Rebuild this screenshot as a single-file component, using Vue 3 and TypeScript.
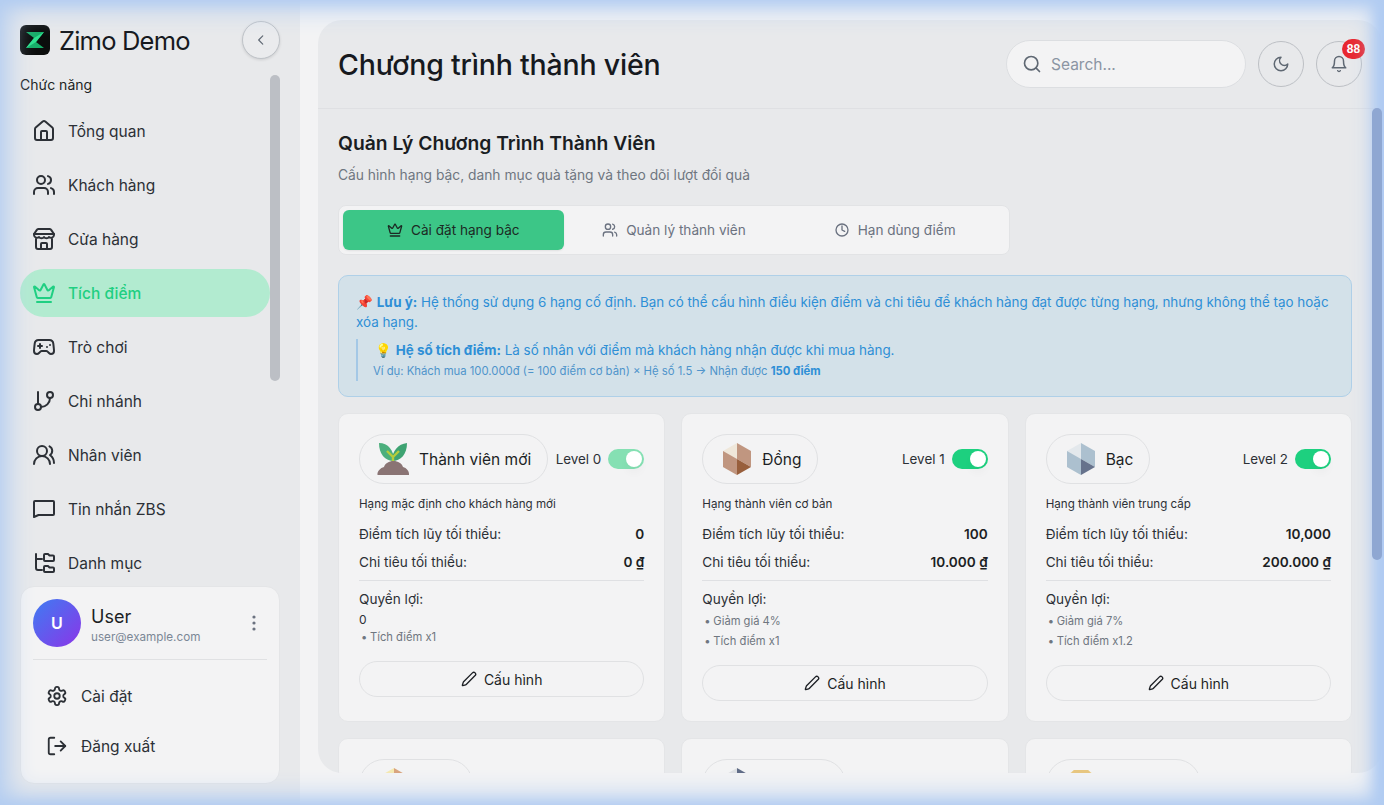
<template>
  <div class="shell">
    <aside class="sidebar">
      <div class="brand">
        <svg class="logo" width="30" height="30" viewBox="0 0 30 30">
          <rect width="30" height="30" rx="6" fill="#0b0d0c" />
          <path d="M6 7h18l-8 10 8 6H6l8-10z" fill="#17ad68" />
          <path d="M24 7l-8 10-10 6 8-10z" fill="#2ee08e" />
        </svg>
        <span class="brand-name">Zimo Demo</span>
        <button type="button" class="collapse-btn">
          <svg width="14" height="14" viewBox="0 0 24 24" fill="none" stroke="#5f6873" stroke-width="2" stroke-linecap="round" stroke-linejoin="round"><path d="m15 5-7 7 7 7" /></svg>
        </button>
      </div>
      <div class="nav-area">
        <div class="nav-scroll">
          <div class="nav-label">Chức năng</div>
          <nav class="nav">
            <a v-for="item in navItems" :key="item.label" class="nav-item" :class="{ active: item.active }">
              <svg width="24" height="24" viewBox="0 0 24 24" fill="none" stroke="currentColor" stroke-width="2" stroke-linecap="round" stroke-linejoin="round">
                <path v-for="d in item.paths" :key="d" :d="d" />
              </svg>
              <span>{{ item.label }}</span>
            </a>
          </nav>
        </div>
        <div class="nav-thumb"></div>
      </div>
      <div class="user-card">
        <div class="user-row">
          <div class="avatar">U</div>
          <div class="user-info">
            <div class="user-name">User</div>
            <div class="user-email">user@example.com</div>
          </div>
          <svg class="kebab" width="4" height="16" viewBox="0 0 4 16" fill="#6b7280"><circle cx="2" cy="2" r="1.6" /><circle cx="2" cy="8" r="1.6" /><circle cx="2" cy="14" r="1.6" /></svg>
        </div>
        <div class="user-actions">
          <a class="user-action">
            <svg width="22" height="22" viewBox="0 0 24 24" fill="none" stroke="currentColor" stroke-width="2" stroke-linecap="round" stroke-linejoin="round">
              <path d="M12.22 2h-.44a2 2 0 0 0-2 2v.18a2 2 0 0 1-1 1.73l-.43.25a2 2 0 0 1-2 0l-.15-.08a2 2 0 0 0-2.73.73l-.22.38a2 2 0 0 0 .73 2.73l.15.1a2 2 0 0 1 1 1.72v.51a2 2 0 0 1-1 1.74l-.15.09a2 2 0 0 0-.73 2.73l.22.38a2 2 0 0 0 2.73.73l.15-.08a2 2 0 0 1 2 0l.43.25a2 2 0 0 1 1 1.73V20a2 2 0 0 0 2 2h.44a2 2 0 0 0 2-2v-.18a2 2 0 0 1 1-1.73l.43-.25a2 2 0 0 1 2 0l.15.08a2 2 0 0 0 2.73-.73l.22-.39a2 2 0 0 0-.73-2.73l-.15-.08a2 2 0 0 1-1-1.74v-.5a2 2 0 0 1 1-1.74l.15-.09a2 2 0 0 0 .73-2.73l-.22-.38a2 2 0 0 0-2.73-.73l-.15.08a2 2 0 0 1-2 0l-.43-.25a2 2 0 0 1-1-1.73V4a2 2 0 0 0-2-2z" />
              <circle cx="12" cy="12" r="3" />
            </svg>
            <span>Cài đặt</span>
          </a>
          <a class="user-action">
            <svg width="22" height="22" viewBox="0 0 24 24" fill="none" stroke="currentColor" stroke-width="2" stroke-linecap="round" stroke-linejoin="round">
              <path d="M9 21H5a2 2 0 0 1-2-2V5a2 2 0 0 1 2-2h4" /><path d="M10 12h11" /><path d="m16 7 5 5-5 5" />
            </svg>
            <span>Đăng xuất</span>
          </a>
        </div>
      </div>
    </aside>

    <main class="panel">
      <header class="topbar">
        <h1 class="page-title">Chương trình thành viên</h1>
        <div class="top-actions">
          <div class="search">
            <svg width="20" height="20" viewBox="0 0 24 24" fill="none" stroke="#5f6873" stroke-width="2" stroke-linecap="round"><circle cx="11" cy="11" r="8" /><path d="m21 21-4-4" /></svg>
            <span class="search-text">Search...</span>
          </div>
          <button type="button" class="round-btn">
            <svg width="18" height="18" viewBox="0 0 24 24" fill="none" stroke="#5f6873" stroke-width="2" stroke-linecap="round" stroke-linejoin="round"><path d="M12 3a6 6 0 0 0 9 9 9 9 0 1 1-9-9Z" /></svg>
          </button>
          <button type="button" class="round-btn">
            <svg width="18" height="18" viewBox="0 0 24 24" fill="none" stroke="#5f6873" stroke-width="2" stroke-linecap="round" stroke-linejoin="round"><path d="M6 8a6 6 0 0 1 12 0c0 7 3 9 3 9H3s3-2 3-9" /><path d="M10.3 21a1.94 1.94 0 0 0 3.4 0" /></svg>
            <span class="badge">88</span>
          </button>
        </div>
      </header>

      <div class="content">
        <h2 class="section-title">Quản Lý Chương Trình Thành Viên</h2>
        <p class="section-sub">Cấu hình hạng bậc, danh mục quà tặng và theo dõi lượt đổi quà</p>

        <div class="tabs">
          <button v-for="tab in tabs" :key="tab.label" type="button" class="tab" :class="{ active: tab.active }">
            <svg width="16" height="16" viewBox="0 0 24 24" fill="none" stroke="currentColor" stroke-width="2" stroke-linecap="round" stroke-linejoin="round">
              <path v-for="d in tab.paths" :key="d" :d="d" />
            </svg>
            {{ tab.label }}
          </button>
        </div>

        <div class="notice">
          <p class="notice-main">📌 <b>Lưu ý:</b> Hệ thống sử dụng 6 hạng cố định. Bạn có thể cấu hình điều kiện điểm và chi tiêu để khách hàng đạt được từng hạng, nhưng không thể tạo hoặc xóa hạng.</p>
          <div class="notice-sub">
            <p class="notice-factor">💡 <b>Hệ số tích điểm:</b> Là số nhân với điểm mà khách hàng nhận được khi mua hàng.</p>
            <p class="notice-example">Ví dụ: Khách mua 100.000đ (= 100 điểm cơ bản) × Hệ số 1.5 → Nhận được <b>150 điểm</b></p>
          </div>
        </div>

        <div class="tier-grid">
          <section v-for="tier in tiers" :key="tier.level" class="tier-card">
            <div class="tier-head">
              <div class="tier-chip">
                <svg v-if="tier.icon === 'sprout'" width="36" height="36" viewBox="0 0 36 36">
                  <path d="M18 20C9 20 3 13 3 2c9 0 15 7 15 18z" fill="#4caf7d" />
                  <path d="M16 20C16 10 22 3 31 2c0 11-6 18-15 18z" fill="#3ea372" />
                  <path d="M17 22v-7M17 16l-6-6M17 16l6-6" stroke="#b5cc3c" stroke-width="2.400" fill="none" />
                  <path d="M1.500 34c-.5-4 3-7 6.500-8 1-3.500 5-6 9.500-6s8.500 2.500 9.500 6c3.500 1 6.500 4 6 8z" fill="#8a7474" />
                </svg>
                <svg v-else-if="tier.icon === 'gem'" width="36" height="36" viewBox="0 0 36 36">
                  <path d="M11 4h14l5 4v6L18 33 6 14V8z" :fill="tier.colors[1]" />
                  <path d="M11 4h14l3 3H8z" :fill="tier.colors[0]" />
                </svg>
                <svg v-else width="36" height="36" viewBox="0 0 36 36">
                  <path d="M18 2 4 10v16l14 8z" :fill="tier.colors[0]" />
                  <path d="M18 2l14 8v16l-14-8z" :fill="tier.colors[1]" />
                  <path d="M4 10l14 8v16L4 26z" :fill="tier.colors[3] || tier.colors[1]" />
                  <path d="M18 18l14 8-14 8z" :fill="tier.colors[2]" />
                </svg>
                <span class="tier-name">{{ tier.name }}</span>
              </div>
              <div class="tier-level">
                <span>Level {{ tier.level }}</span>
                <span class="switch" :class="{ dim: tier.level === 0 }"><span class="knob"></span></span>
              </div>
            </div>
            <p class="tier-desc">{{ tier.desc }}</p>
            <div class="tier-row"><span>Điểm tích lũy tối thiểu:</span><b>{{ tier.points }}</b></div>
            <div class="tier-row"><span>Chi tiêu tối thiểu:</span><b>{{ tier.spend }} ₫</b></div>
            <div class="tier-benefits">
              <div class="benefit-title">Quyền lợi:</div>
              <div v-if="tier.rawZero" class="benefit-zero">0</div>
              <ul class="benefit-list" :class="{ tight: tier.rawZero }">
                <li v-for="b in tier.benefits" :key="b">{{ b }}</li>
              </ul>
            </div>
            <button type="button" class="config-btn">
              <svg width="16" height="16" viewBox="0 0 24 24" fill="none" stroke="currentColor" stroke-width="2" stroke-linecap="round" stroke-linejoin="round"><path d="M21.170 6.810a2.820 2.820 0 0 0-3.990-3.990L3.840 16.170a2 2 0 0 0-.5.830l-1.320 4.350a.5.5 0 0 0 .62.620l4.350-1.320a2 2 0 0 0 .83-.5z" /></svg>
              Cấu hình
            </button>
          </section>
        </div>
      </div>
    </main>
    <div class="edge-glow"></div>
    <div class="content-thumb"></div>
  </div>
</template>

<script setup lang="ts">
interface NavItem {
  label: string
  paths: string[]
  active?: boolean
}

interface Tier {
  level: number
  name: string
  icon: 'sprout' | 'hex' | 'gem'
  colors: string[]
  desc: string
  points: string
  spend: string
  rawZero?: boolean
  benefits: string[]
}

const crownPaths = [
  'M11.6 3.3a.5.5 0 0 1 .8 0l3 5.7a1 1 0 0 0 1.5.3l4.3-3.7a.5.5 0 0 1 .8.5l-2.8 10.2a1 1 0 0 1-1 .7H5.8a1 1 0 0 1-1-.7L2 6.1a.5.5 0 0 1 .8-.5l4.3 3.7a1 1 0 0 0 1.500-.3z',
  'M5 21h14'
]
const usersPaths = [
  'M16 21v-2a4 4 0 0 0-4-4H6a4 4 0 0 0-4 4v2',
  'M13 7a4 4 0 1 1-8 0 4 4 0 0 1 8 0',
  'M22 21v-2a4 4 0 0 0-3-3.87',
  'M16 3.13a4 4 0 0 1 0 7.75'
]

const navItems: NavItem[] = [
  { label: 'Tổng quan', paths: ['M15 21v-8a1 1 0 0 0-1-1h-4a1 1 0 0 0-1 1v8', 'M3 10a2 2 0 0 1 .7-1.5l7-6a2 2 0 0 1 2.6 0l7 6a2 2 0 0 1 .7 1.5v9a2 2 0 0 1-2 2H5a2 2 0 0 1-2-2z'] },
  { label: 'Khách hàng', paths: usersPaths },
  { label: 'Cửa hàng', paths: ['m2 7 2.7-3.9A2 2 0 0 1 6.3 2h11.4a2 2 0 0 1 1.6 1.1L22 7', 'M2 7h20v1a3 3 0 0 1-5 2 3 3 0 0 1-5 0 3 3 0 0 1-5 0 3 3 0 0 1-5-2z', 'M4 12v8a2 2 0 0 0 2 2h12a2 2 0 0 0 2-2v-8', 'M15 22v-5a1 1 0 0 0-1-1h-4a1 1 0 0 0-1 1v5'] },
  { label: 'Tích điểm', active: true, paths: crownPaths },
  { label: 'Trò chơi', paths: ['M6 11h4', 'M8 9v4', 'M15 12h.01', 'M18 10h.01', 'M17.3 5H6.7a4 4 0 0 0-4 3.6C2.6 9.6 2 14.5 2 16a3 3 0 0 0 3 3c1 0 1.5-.5 2-1l1.4-1.4A2 2 0 0 1 9.8 16h4.4a2 2 0 0 1 1.4.6L17 18c.5.5 1 1 2 1a3 3 0 0 0 3-3c0-1.5-.6-6.4-.7-7.4A4 4 0 0 0 17.3 5'] },
  { label: 'Chi nhánh', paths: ['M6 3v12', 'M21 6a3 3 0 1 1-6 0 3 3 0 0 1 6 0', 'M9 18a3 3 0 1 1-6 0 3 3 0 0 1 6 0', 'M18 9a9 9 0 0 1-9 9'] },
  { label: 'Nhân viên', paths: ['M18 21a8 8 0 0 0-16 0', 'M15 8a5 5 0 1 1-10 0 5 5 0 0 1 10 0', 'M22 20c0-3.4-2-6.5-4-8a5 5 0 0 0-.5-8.6'] },
  { label: 'Tin nhắn ZBS', paths: ['M2 20V5a1 1 0 0 1 1-1h18a1 1 0 0 1 1 1v12a1 1 0 0 1-1 1H6.5z'] },
  { label: 'Danh mục', paths: ['M4 3v14a2 2 0 0 0 2 2h4', 'M4 8h6', 'M13 10a1 1 0 0 1-1-1V4a1 1 0 0 1 1-1h3l1.5 1.5H21a1 1 0 0 1 1 1V9a1 1 0 0 1-1 1z', 'M13 21a1 1 0 0 1-1-1v-4a1 1 0 0 1 1-1h3l1.5 1.5H21a1 1 0 0 1 1 1V20a1 1 0 0 1-1 1z'] }
]

const tabs = [
  { label: 'Cài đặt hạng bậc', active: true, paths: crownPaths },
  { label: 'Quản lý thành viên', active: false, paths: usersPaths },
  { label: 'Hạn dùng điểm', active: false, paths: ['M21 12a9 9 0 1 1-18 0 9 9 0 0 1 18 0', 'M12 6v6l4 2'] }
]

const tiers: Tier[] = [
  { level: 0, name: 'Thành viên mới', icon: 'sprout', colors: [], desc: 'Hạng mặc định cho khách hàng mới', points: '0', spend: '0', rawZero: true, benefits: ['Tích điểm x1'] },
  { level: 1, name: 'Đồng', icon: 'hex', colors: ['#efe7da', '#c09680', '#985f3c'], desc: 'Hạng thành viên cơ bản', points: '100', spend: '10.000', benefits: ['Giảm giá 4%', 'Tích điểm x1'] },
  { level: 2, name: 'Bạc', icon: 'hex', colors: ['#e3e8ec', '#acc0cf', '#66728c'], desc: 'Hạng thành viên trung cấp', points: '10,000', spend: '200.000', benefits: ['Giảm giá 7%', 'Tích điểm x1.2'] },
  { level: 3, name: 'Vàng', icon: 'hex', colors: ['#f5e9b0', '#d9a37c', '#a8763c'], desc: 'Hạng thành viên cao cấp', points: '50,000', spend: '1.000.000', benefits: ['Giảm giá 10%', 'Tích điểm x1.5'] },
  { level: 4, name: 'Bạch kim', icon: 'hex', colors: ['#dfe1e4', '#5e6a85', '#454f66', '#8b95a8'], desc: 'Hạng thành viên thân thiết', points: '100,000', spend: '5.000.000', benefits: ['Giảm giá 12%', 'Tích điểm x2'] },
  { level: 5, name: 'Kim cương', icon: 'gem', colors: ['#e8c67e', '#f2e0ad'], desc: 'Hạng thành viên cao nhất', points: '500,000', spend: '10.000.000', benefits: ['Giảm giá 15%', 'Tích điểm x3'] }
]
</script>

<style scoped>
.shell {
  position: relative;
  display: flex;
  width: 1384px;
  height: 805px;
  overflow: hidden;
  background: #f3f3f4;
  font-family: Inter, "Noto Sans", sans-serif;
  color: #1f2329;
}

.edge-glow {
  position: absolute;
  inset: 0;
  pointer-events: none;
  box-shadow: inset 0 0 26px 8px #b3cdf1, inset -8px 0 14px 0 #9fc2f6;
}

.sidebar {
  flex: 0 0 300px;
  display: flex;
  flex-direction: column;
  padding: 25px 20px 21px;
  box-sizing: border-box;
  height: 805px;
  background: #e8e9eb;
}

.brand {
  display: flex;
  align-items: center;
  height: 30px;
  flex: none;
}

.logo {
  flex: none;
}

.brand-name {
  margin-left: 9px;
  font-size: 25.500px;
  letter-spacing: -0.8px;
  color: #16191e;
}

.collapse-btn {
  display: grid;
  place-items: center;
  width: 38px;
  height: 38px;
  margin-left: auto;
  background: #eaebed;
  border: 1px solid #bfc3c8;
  border-radius: 50%;
  box-shadow: 0 1px 3px rgba(0, 0, 0, 0.12);
}

.nav-area {
  position: relative;
  flex: 1;
  min-height: 0;
  margin-top: 20px;
  overflow: hidden;
}

.nav-thumb {
  position: absolute;
  top: 0;
  right: 0;
  width: 10px;
  height: 306px;
  background: #bcbfc5;
  border-radius: 5px;
}

.nav-label {
  font-size: 14px;
  line-height: 20px;
  color: #1c1f24;
}

.nav-scroll {
  width: 250px;
}

.nav {
  display: flex;
  flex-direction: column;
  gap: 6px;
  margin-top: 12px;
}

.nav-item {
  display: flex;
  align-items: center;
  gap: 12px;
  flex: none;
  height: 48px;
  padding-left: 12px;
  border-radius: 24px;
  font-size: 15.500px;
  color: #2c3036;
}

.nav-item svg {
  flex: none;
}

.nav-item.active {
  background: #b2ebd0;
  color: #1fcf82;
  font-weight: 500;
}

.user-card {
  flex: none;
  height: 198px;
  box-sizing: border-box;
  padding: 12px 12px 0;
  background: #f3f3f4;
  border: 1px solid #e4e5e7;
  border-radius: 14px;
}

.user-row {
  display: flex;
  align-items: center;
  gap: 10px;
  height: 48px;
  padding-bottom: 12px;
  border-bottom: 1px solid #e0e1e3;
  box-sizing: content-box;
}

.avatar {
  display: grid;
  place-items: center;
  flex: none;
  width: 48px;
  height: 48px;
  border-radius: 50%;
  background: linear-gradient(135deg, #3e7cf2, #8b35e8);
  color: #fff;
  font-size: 16px;
  font-weight: 600;
}

.user-info {
  flex: 1;
  padding-top: 4px;
}

.user-name {
  font-size: 18px;
  line-height: 24px;
  color: #1c1f24;
}

.user-email {
  font-size: 11.700px;
  line-height: 16px;
  color: #7b8796;
}

.kebab {
  margin-right: 11px;
}

.user-actions {
  display: flex;
  flex-direction: column;
  gap: 6px;
  margin-top: 14px;
}

.user-action {
  display: flex;
  align-items: center;
  gap: 13px;
  height: 44px;
  padding-left: 13px;
  font-size: 15.500px;
  color: #2c3036;
}

.panel {
  position: relative;
  flex: none;
  width: 1064px;
  height: 753px;
  margin: 20px 0 0 18px;
  background: #e8e9eb;
  border-radius: 24px;
  overflow: hidden;
}

.content-thumb {
  position: absolute;
  top: 108px;
  right: 2px;
  width: 10px;
  height: 452px;
  background: #8fa7d2;
  border-radius: 5px;
}

.topbar {
  display: flex;
  align-items: center;
  justify-content: space-between;
  box-sizing: border-box;
  height: 89px;
  padding: 0 20px;
  border-bottom: 1px solid #dfe0e3;
}

.page-title {
  margin: 0;
  font-size: 28.500px;
  font-weight: 500;
  letter-spacing: -0.2px;
  color: #16191e;
}

.top-actions {
  display: flex;
  align-items: center;
  gap: 12px;
}

.search {
  display: flex;
  align-items: center;
  gap: 9px;
  box-sizing: border-box;
  width: 240px;
  height: 48px;
  padding-left: 15px;
  background: #f3f3f4;
  border: 1px solid #dcdee1;
  border-radius: 24px;
}

.search-text {
  font-size: 15.500px;
  color: #8b95a3;
}

.round-btn {
  position: relative;
  display: grid;
  place-items: center;
  width: 46px;
  height: 46px;
  background: transparent;
  border: 1px solid #bcbfc4;
  border-radius: 50%;
}

.badge {
  position: absolute;
  top: -3px;
  right: -4px;
  min-width: 23px;
  height: 20px;
  line-height: 20px;
  background: #e8262f;
  border-radius: 10px;
  color: #fff;
  font-size: 12px;
  font-weight: 700;
  text-align: center;
}

.content {
  box-sizing: border-box;
  width: 1054px;
  padding: 20px 20px 0;
}

.section-title {
  margin: 0;
  font-size: 19.300px;
  line-height: 28px;
  font-weight: 600;
  color: #1a1d22;
}

.section-sub {
  margin: 8px 0 0;
  font-size: 13.800px;
  line-height: 20px;
  color: #6f7680;
}

.tabs {
  display: flex;
  box-sizing: border-box;
  width: 672px;
  height: 50px;
  margin-top: 20px;
  padding: 4px;
  background: #f3f3f4;
  border: 1px solid #e2e3e5;
  border-radius: 8px;
}

.tab {
  flex: 1;
  display: flex;
  align-items: center;
  justify-content: center;
  gap: 8px;
  padding: 0;
  background: transparent;
  border: 0;
  border-radius: 6px;
  font: inherit;
  font-size: 13.600px;
  color: #6b7280;
}

.tab.active {
  background: #3cc687;
  color: #1c2a24;
  box-shadow: 0 1px 2px rgba(0, 0, 0, 0.08);
}

.notice {
  box-sizing: border-box;
  height: 122px;
  margin-top: 20px;
  padding: 16px 17px;
  background: #d3e1e9;
  border: 1px solid #afd0e8;
  border-radius: 10px;
  color: #2e8fd6;
  font-size: 13.400px;
}

.notice p {
  margin: 0;
}

.notice-main {
  line-height: 20px;
}

.notice-sub {
  margin-top: 7px;
  padding-left: 15px;
  border-left: 2px solid #a4c8e6;
}

.notice-factor {
  padding-left: 2px;
  line-height: 22px;
}

.notice-example {
  font-size: 11.300px;
  line-height: 20px;
  color: #4f94cb;
}

.notice-example b {
  color: #2e8fd6;
}

.tier-grid {
  display: grid;
  grid-template-columns: repeat(3, minmax(0, 1fr));
  gap: 16px;
  margin-top: 16px;
}

.tier-card {
  box-sizing: border-box;
  padding: 20px;
  background: #f3f3f4;
  border: 1px solid #e4e5e7;
  border-radius: 10px;
}

.tier-head {
  display: flex;
  align-items: center;
  justify-content: space-between;
}

.tier-chip {
  display: flex;
  align-items: center;
  gap: 7px;
  box-sizing: border-box;
  height: 50px;
  padding: 0 16px;
  border: 1px solid #e0e1e3;
  border-radius: 25px;
}

.tier-name {
  font-size: 15.500px;
  color: #1c1f24;
  white-space: nowrap;
}

.tier-level {
  display: flex;
  align-items: center;
  gap: 7px;
  font-size: 13.400px;
  white-space: nowrap;
  color: #2c3036;
}

.switch {
  position: relative;
  width: 36px;
  height: 20px;
  background: #1dd07f;
  border-radius: 10px;
}

.switch.dim {
  background: #85e0b3;
}

.knob {
  position: absolute;
  top: 2px;
  right: 2px;
  width: 16px;
  height: 16px;
  background: #fff;
  border-radius: 50%;
  box-shadow: 0 6px 10px rgba(0, 0, 0, 0.03);
}

.tier-desc {
  margin: 10px 0 0;
  padding-bottom: 2px;
  font-size: 11.600px;
  line-height: 20px;
  color: #2c3036;
}

.tier-row {
  display: flex;
  justify-content: space-between;
  margin-top: 8px;
  font-size: 13.600px;
  line-height: 20px;
  color: #2c3036;
}

.tier-row b {
  font-weight: 600;
  color: #1c1f24;
}

.tier-benefits {
  margin-top: 8px;
  padding-top: 8px;
  border-top: 1px solid #dfe0e3;
}

.benefit-title {
  font-size: 13.600px;
  line-height: 20px;
  color: #2c3036;
}

.benefit-zero {
  margin-top: 3px;
  font-size: 12px;
  line-height: 16px;
  color: #2c3036;
}

.benefit-list {
  margin: 2px 0 0;
  padding: 0;
  list-style: none;
  font-size: 11.200px;
  line-height: 20px;
  color: #6f7680;
}

.benefit-list.tight {
  margin-top: 1px;
  padding-bottom: 2px;
  line-height: 16px;
}

.benefit-list li::before {
  content: "•";
  display: inline-block;
  width: 9px;
  padding-left: 2px;
}

.config-btn {
  display: flex;
  align-items: center;
  justify-content: center;
  gap: 7px;
  box-sizing: border-box;
  width: 100%;
  height: 36px;
  margin-top: 14px;
  background: transparent;
  border: 1px solid #e0e1e3;
  border-radius: 18px;
  font: inherit;
  font-size: 14px;
  color: #1c1f24;
}
</style>

<style>
html,
body {
  margin: 0;
  overflow: hidden;
}
</style>
